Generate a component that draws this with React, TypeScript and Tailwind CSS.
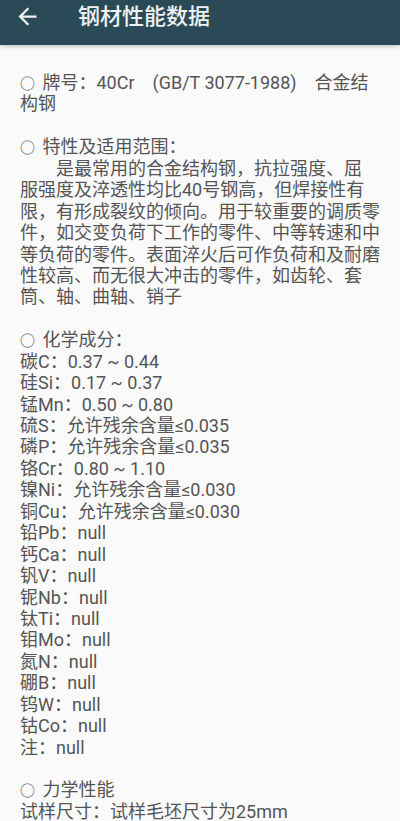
import React from "react";

const lines: string[] = [
  "○ 牌号：40Cr　(GB/T 3077-1988)　合金结",
  "构钢",
  "",
  "○ 特性及适用范围：",
  "　　是最常用的合金结构钢，抗拉强度、屈",
  "服强度及淬透性均比40号钢高，但焊接性有",
  "限，有形成裂纹的倾向。用于较重要的调质零",
  "件，如交变负荷下工作的零件、中等转速和中",
  "等负荷的零件。表面淬火后可作负荷和及耐磨",
  "性较高、而无很大冲击的零件，如齿轮、套",
  "筒、轴、曲轴、销子",
  "",
  "○ 化学成分：",
  "碳C：0.37 ~ 0.44",
  "硅Si：0.17 ~ 0.37",
  "锰Mn：0.50 ~ 0.80",
  "硫S：允许残余含量≤0.035",
  "磷P：允许残余含量≤0.035",
  "铬Cr：0.80 ~ 1.10",
  "镍Ni：允许残余含量≤0.030",
  "铜Cu：允许残余含量≤0.030",
  "铅Pb：null",
  "钙Ca：null",
  "钒V：null",
  "铌Nb：null",
  "钛Ti：null",
  "钼Mo：null",
  "氮N：null",
  "硼B：null",
  "钨W：null",
  "钴Co：null",
  "注：null",
  "",
  "○ 力学性能",
  "试样尺寸：试样毛坯尺寸为25mm",
];

// section titles start with a hollow bullet, drawn a bit smaller than the text
function Line({ text }: { text: string }) {
  if (!text) return <div className="h-[21.44px]" />;
  if (text.startsWith("○")) {
    return (
      <div className="h-[21.44px]">
        <span className="inline-block w-[18px] text-[15px] leading-none">○</span>
        {text.slice(1)}
      </div>
    );
  }
  return <div className="h-[21.44px]">{text}</div>;
}

export default function App() {
  return (
    <div className="h-[821px] w-[400px] overflow-hidden bg-[#fafafa] font-['Roboto','Noto_Sans_CJK_SC',sans-serif]">
      {/* toolbar */}
      <header className="relative z-10 h-[45px] bg-[#2b4a57] shadow-[0_2px_3px_rgba(0,0,0,0.18)]">
        <div className="flex h-[32px] items-center">
          <svg viewBox="0 0 24 24" className="ml-[14px] h-[27px] w-[27px] fill-[#eef2f3]">
            <path d="M20 11H7.83l5.59-5.59L12 4l-8 8 8 8 1.41-1.41L7.83 13H20v-2z" />
          </svg>
          <h1 className="ml-[37px] text-[22px] font-medium text-[#eef2f3]">钢材性能数据</h1>
        </div>
      </header>

      {/* detail text */}
      <div className="whitespace-pre px-5 pt-[27px] text-[18px] leading-[21.44px] text-[#555]">
        {lines.map((l, i) => (
          <Line key={i} text={l} />
        ))}
      </div>
    </div>
  );
}
